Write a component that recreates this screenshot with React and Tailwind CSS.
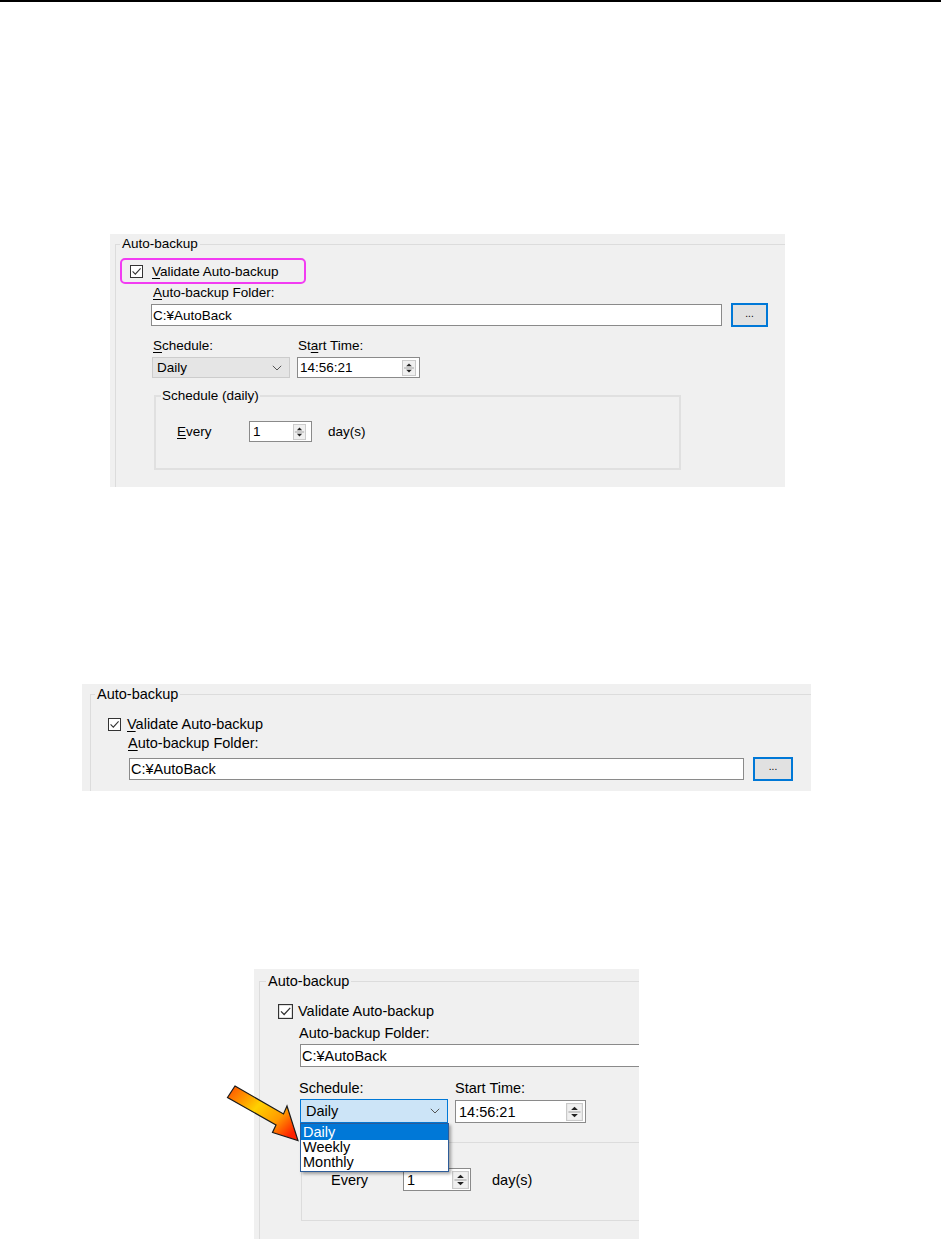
import React from 'react';

// Small drawn widgets used by all three dialog captures
const CheckBox = ({ size }) => (
  <svg width={size} height={size} viewBox="0 0 13 13" className="shrink-0">
    <rect x="0.5" y="0.5" width="12" height="12" fill="#fff" stroke="#333" />
    <path d="M2.6 6.4 L5.3 9.1 L10.6 3.4" fill="none" stroke="#333" strokeWidth="1.1" />
  </svg>
);

const Spinner = ({ w, h }) => (
  <svg width={w} height={h} viewBox="0 0 14 17" preserveAspectRatio="none" className="shrink-0">
    <rect x="0.5" y="0.5" width="13" height="16" fill="#f0f0f0" stroke="#c9c9c9" />
    <line x1="2" y1="8.5" x2="12" y2="8.5" stroke="#a0a0a0" />
    <path d="M7 3.6 L9.8 6.6 L4.2 6.6Z" fill="#222" />
    <path d="M4.2 10.4 L9.8 10.4 L7 13.4Z" fill="#222" />
  </svg>
);

const Chevron = () => (
  <svg width="10" height="6" viewBox="0 0 10 6" className="shrink-0">
    <path d="M0.8 0.8 L5 5 L9.2 0.8" fill="none" stroke="#555" strokeWidth="1" />
  </svg>
);

const Arrow = () => (
  <svg width="90" height="70" viewBox="0 0 90 70">
    <defs>
      <linearGradient id="arrowFill" x1="0" y1="0" x2="1" y2="0.75">
        <stop offset="0" stopColor="#ff4a00" />
        <stop offset="0.45" stopColor="#ffd000" />
        <stop offset="0.75" stopColor="#ff9a00" />
        <stop offset="1" stopColor="#ff2200" />
      </linearGradient>
    </defs>
    <polygon
      points="15,6 63.5,34 67,26 78,60.5 52.5,52.5 56,45 7.5,17.5"
      fill="url(#arrowFill)"
      stroke="#1a1a1a"
      strokeWidth="1.2"
      strokeLinejoin="miter"
    />
  </svg>
);

const u = (ch) => <span className="underline underline-offset-[2px]">{ch}</span>;

export default function App() {
  return (
    <div className="min-h-[1239px] bg-white font-['Liberation_Sans',Arial,sans-serif] text-black">
      <div className="h-[2px] bg-black" />

      {/* Capture 1: full auto-backup group, checkbox highlighted */}
      <div className="ml-[110px] mt-[232px] h-[253px] w-[675px] overflow-hidden bg-[#f0f0f0] pl-[5px] pt-[10px] text-[13.5px] leading-[17px]">
        <div className="h-[300px] w-[700px] border-l border-t border-[#dcdcdc]">
          <div className="-mt-[10px] ml-[4px] w-fit bg-[#f0f0f0] px-[2px]">Auto-backup</div>

          <div className="ml-[4px] mt-[6px] flex h-[26px] w-[186px] items-center rounded-[5px] border-2 border-[#f23cf2] pl-[8px] pt-[1px]">
            <CheckBox size={13} />
            <span className="ml-[9px]">{u('V')}alidate Auto-backup</span>
          </div>

          <div className="ml-[37px]">{u('A')}uto-backup Folder:</div>

          <div className="ml-[35px] mt-[2px] flex items-center">
            <div className="flex h-[22px] w-[571px] items-center border border-[#8a8a8a] bg-white pl-[1px]">C:¥AutoBack</div>
            <div className="ml-[9px] flex h-[24px] w-[37px] items-center justify-center border-2 border-[#0078d7] bg-[#e1e1e1] pb-[4px] text-[10px]">...</div>
          </div>

          <div className="ml-[36px] mt-[10px] flex">
            <div className="w-[138px]">
              <div className="pl-[1px]">{u('S')}chedule:</div>
              <div className="mt-[3px] flex h-[21px] items-center justify-between border border-[#cccccc] bg-[#e5e5e5] pl-[4px] pr-[7px]">
                <span>Daily</span>
                <Chevron />
              </div>
            </div>
            <div className="ml-[7px] w-[123px]">
              <div className="pl-[1px]">St{u('a')}rt Time:</div>
              <div className="mt-[3px] flex h-[21px] items-center justify-between border border-[#8a8a8a] bg-white pl-[2px] pr-[3px]">
                <span>14:56:21</span>
                <Spinner w={14} h={16} />
              </div>
            </div>
          </div>

          <div className="ml-[38px] mt-[17px] h-[75px] w-[527px] border-2 border-[#e0e0e0]">
            <div className="-mt-[10px] ml-[5px] w-fit bg-[#f0f0f0] px-[1px]">Schedule (daily)</div>
            <div className="mt-[17px] flex items-center">
              <span className="ml-[21px] w-[72px]">{u('E')}very</span>
              <div className="flex h-[21px] w-[63px] items-center justify-between border border-[#8a8a8a] bg-white pl-[3px] pr-[5px]">
                <span>1</span>
                <Spinner w={13} h={16} />
              </div>
              <span className="ml-[16px]">day(s)</span>
            </div>
          </div>
        </div>
      </div>

      {/* Capture 2: checkbox and folder only */}
      <div className="ml-[82px] mt-[197px] h-[107px] w-[729px] overflow-hidden bg-[#f0f0f0] pl-[8px] pt-[10px] text-[14.5px] leading-[18px]">
        <div className="h-[200px] w-[760px] border-l border-t border-[#dcdcdc]">
          <div className="-mt-[10px] ml-[4px] w-fit bg-[#f0f0f0] px-[2px]">Auto-backup</div>

          <div className="ml-[17px] mt-[12px] flex items-center">
            <CheckBox size={13} />
            <span className="ml-[6px]">{u('V')}alidate Auto-backup</span>
          </div>

          <div className="ml-[37px] mt-[1px]">{u('A')}uto-backup Folder:</div>

          <div className="ml-[38px] mt-[5px] flex items-center">
            <div className="flex h-[22px] w-[615px] items-center border border-[#8a8a8a] bg-white pl-[1px]">C:¥AutoBack</div>
            <div className="ml-[9px] flex h-[24px] w-[40px] items-center justify-center border-2 border-[#0078d7] bg-[#e1e1e1] pb-[4px] text-[10px]">...</div>
          </div>
        </div>
      </div>

      {/* Capture 3: schedule drop-down opened */}
      <div className="relative mt-[178px]">
        <div className="ml-[254px] h-[270px] w-[385px] overflow-hidden bg-[#f0f0f0] pl-[5px] pt-[12px] text-[14.5px] leading-[18px]">
          <div className="h-[320px] w-[420px] border-l border-t border-[#dcdcdc]">
            <div className="-mt-[10px] ml-[6px] w-fit bg-[#f0f0f0] px-[2px]">Auto-backup</div>

            <div className="ml-[18px] mt-[12px] flex items-center">
              <CheckBox size={15} />
              <span className="ml-[5px]">Validate Auto-backup</span>
            </div>

            <div className="ml-[39px] mt-[4px]">Auto-backup Folder:</div>

            <div className="ml-[40px] mt-[2px] flex h-[23px] w-[400px] items-center border border-[#8a8a8a] bg-white pl-[1px]">C:¥AutoBack</div>

            <div className="ml-[39px] mt-[12px] flex">
              <div className="relative w-[150px]">
                <div>Schedule:</div>
                <div className="ml-[1px] mt-[2px] flex h-[24px] w-[148px] items-center justify-between border border-[#0078d7] bg-[#cce4f7] pl-[5px] pr-[7px]">
                  <span>Daily</span>
                  <Chevron />
                </div>
                <div className="absolute left-[1px] top-full z-10 w-[149px] border border-[#2d5c99] bg-white text-[14.5px] leading-[15px] shadow-[2px_2px_3px_rgba(0,0,0,0.35)]">
                  <div className="bg-[#0078d7] pl-[2px] pt-[1px] text-white">Daily</div>
                  <div className="pl-[2px]">Weekly</div>
                  <div className="pl-[2px] pb-[1px]">Monthly</div>
                </div>
              </div>
              <div className="ml-[6px] w-[131px]">
                <div>Start Time:</div>
                <div className="mt-[3px] flex h-[23px] items-center justify-between border border-[#8a8a8a] bg-white pl-[3px] pr-[2px]">
                  <span>14:56:21</span>
                  <Spinner w={17} h={18} />
                </div>
              </div>
            </div>

            {/* inner group box; its caption is covered by the open list */}
            <div className="ml-[41px] mt-[19px] h-[79px] w-[400px] border border-[#dcdcdc]">
              <div className="mt-[25px] flex items-center">
                <span className="ml-[29px] w-[72px]">Every</span>
                <div className="flex h-[23px] w-[68px] items-center justify-between border border-[#8a8a8a] bg-white pl-[3px] pr-[1px]">
                  <span>1</span>
                  <Spinner w={17} h={18} />
                </div>
                <span className="ml-[21px]">day(s)</span>
              </div>
            </div>
          </div>
        </div>

        <div className="absolute left-[220px] top-[111px]">
          <Arrow />
        </div>
      </div>
    </div>
  );
}
